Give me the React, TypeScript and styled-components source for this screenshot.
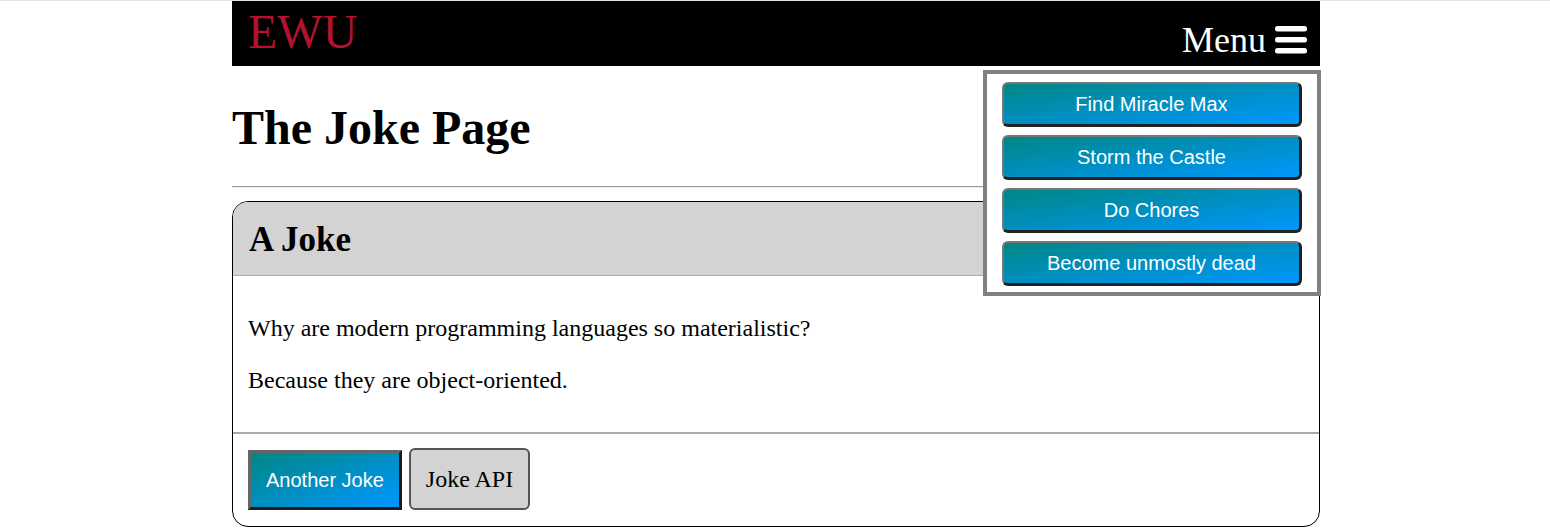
import React from "react";
import styled, { createGlobalStyle } from "styled-components";

const Global = createGlobalStyle`
  html, body { margin: 0; padding: 0; background: #fff; }
  body {
    border-top: 1px solid #e3e3e3;
    font-family: "Liberation Serif", "Times New Roman", serif;
    color: #000;
  }
`;

const Page = styled.div`
  width: 1088px;
  margin: 0 0 0 calc(50% - 543px);
  position: relative;
`;

const Header = styled.header`
  display: flex;
  justify-content: space-between;
  height: 65px;
  background: #000;
  padding: 0 13px 0 16px;
`;

const Logo = styled.div`
  font-size: 48px;
  line-height: 48px;
  color: #b3122f;
  margin-top: 7px;
  align-self: flex-start;
`;

const MenuToggle = styled.div`
  display: flex;
  align-items: center;
  gap: 9px;
  align-self: flex-end;
  margin-bottom: 8px;
  color: #fff;
  font-size: 36px;
  line-height: 36px;
`;

const Dropdown = styled.nav`
  position: absolute;
  top: 69px;
  right: -1px;
  width: 338px;
  box-sizing: border-box;
  background: #fff;
  border: 4px solid #808080;
  padding: 8px 15px 6px;
  display: flex;
  flex-direction: column;
  gap: 8px;
  z-index: 2;
`;

const GradientButton = styled.button<{ $menu?: boolean }>`
  font-family: "Liberation Sans", Arial, sans-serif;
  font-size: 20px;
  color: #fff;
  background: linear-gradient(to bottom right, #008784, #0097ff);
  cursor: pointer;
  ${(p) =>
    p.$menu
      ? `
    height: 45px;
    width: 100%;
    border-style: solid;
    border-width: 2px 3px 3px 2px;
    border-color: #777 #222 #222 #777;
    border-radius: 6px;
  `
      : `
    height: 60px;
    padding: 0 15px;
    border-style: solid;
    border-width: 3px;
    border-color: #666 #1c1c1c #1c1c1c #666;
    border-radius: 0;
  `}
`;

const Title = styled.h1`
  font-size: 48px;
  line-height: 56px;
  font-weight: bold;
  margin: 34px 0 30px;
`;

const Rule = styled.hr`
  margin: 0 0 13px;
  border: none;
  border-top: 1px solid #9a9a9a;
  border-bottom: 1px solid #eee;
`;

const Card = styled.section`
  border: 1px solid #000;
  border-radius: 16px;
  overflow: hidden;
`;

const CardHeader = styled.div`
  background: #d3d3d3;
  border-bottom: 1px solid #aaa;
  padding: 18px 16px 15px;
`;

const CardTitle = styled.h2`
  margin: 0;
  font-size: 35px;
  line-height: 40px;
  font-weight: bold;
`;

const CardBody = styled.div`
  padding: 14px 15px;
`;

const Para = styled.p`
  font-size: 24px;
  line-height: 28px;
  margin: 24px 0;
`;

const CardFooter = styled.div`
  border-top: 2px solid #aaa;
  padding: 14px 15px 16px;
  display: flex;
  align-items: flex-end;
  gap: 7px;
`;

const PlainButton = styled.button`
  height: 62px;
  padding: 0 15px;
  font-family: "Liberation Serif", "Times New Roman", serif;
  font-size: 24px;
  color: #000;
  background: #d3d3d3;
  border: 2px solid #555;
  border-radius: 6px;
  cursor: pointer;
`;

const Bars = () => (
  <svg width="32" height="28" viewBox="0 0 32 28" aria-hidden="true">
    <rect x="0" y="0" width="32" height="5.5" rx="2.5" fill="#fff" />
    <rect x="0" y="11" width="32" height="5.5" rx="2.5" fill="#fff" />
    <rect x="0" y="22" width="32" height="5.5" rx="2.5" fill="#fff" />
  </svg>
);

const menuItems = ["Find Miracle Max", "Storm the Castle", "Do Chores", "Become unmostly dead"];

export default function App() {
  return (
    <>
      <Global />
      <Page>
        <Header>
          <Logo>EWU</Logo>
          <MenuToggle>
            Menu <Bars />
          </MenuToggle>
        </Header>
        <Dropdown>
          {menuItems.map((m) => (
            <GradientButton $menu key={m}>
              {m}
            </GradientButton>
          ))}
        </Dropdown>
        <Title>The Joke Page</Title>
        <Rule />
        <Card>
          <CardHeader>
            <CardTitle>A Joke</CardTitle>
          </CardHeader>
          <CardBody>
            <Para>Why are modern programming languages so materialistic?</Para>
            <Para>Because they are object-oriented.</Para>
          </CardBody>
          <CardFooter>
            <GradientButton>Another Joke</GradientButton>
            <PlainButton>Joke API</PlainButton>
          </CardFooter>
        </Card>
      </Page>
    </>
  );
}
